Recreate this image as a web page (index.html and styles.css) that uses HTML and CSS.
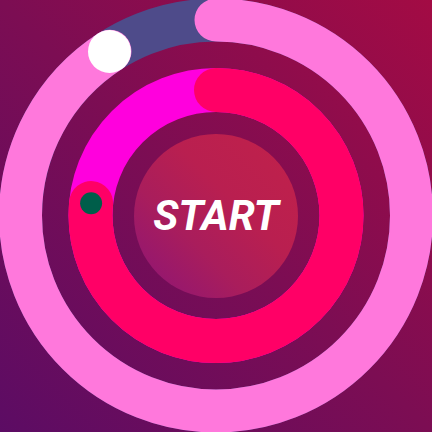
FILE: index.html
```html
<!DOCTYPE html>
<html lang="en">
<head>
<meta charset="utf-8">
<title>Start</title>
<link rel="stylesheet" href="styles.css">
</head>
<body>
<main class="stage">
  <svg class="rings" viewBox="0 0 432 432" width="432" height="432" aria-hidden="true">
    <g transform="rotate(-90 216 215.5)">
      <circle class="outer-track" cx="216" cy="215.5" r="195.5"/>
      <circle class="outer-progress" cx="216" cy="215.5" r="195.5" stroke-dasharray="1115.8 2000"/>
      <circle class="middle-track" cx="216" cy="215.5" r="125.5"/>
      <circle class="middle-progress" cx="216" cy="215.5" r="125.5" stroke-dasharray="603.6 2000"/>
    </g>
    <circle class="knob" cx="109.5" cy="51.5" r="21.5"/>
    <circle class="dot" cx="91.1" cy="203.2" r="11"/>
  </svg>
  <button class="start" type="button">START</button>
</main>
</body>
</html>
```
FILE: styles.css
```css
html, body {
  margin: 0;
  padding: 0;
}

body {
  width: 432px;
  height: 432px;
  overflow: hidden;
  font-family: Roboto, "Liberation Sans", sans-serif;
}

.stage {
  width: 432px;
  height: 432px;
  display: grid;
  background: linear-gradient(45deg, #5c0c64 0%, #7c0d53 50%, #a30b44 100%);
}

.stage > * {
  grid-area: 1 / 1;
}

.rings {
  display: block;
}

.rings circle {
  fill: none;
}

.outer-track {
  stroke: #4e4b8a;
  stroke-width: 43;
}

.outer-progress {
  stroke: #ff78dc;
  stroke-width: 43;
  stroke-linecap: round;
}

.middle-track {
  stroke: #ff00dd;
  stroke-width: 44;
}

.middle-progress {
  stroke: #ff0066;
  stroke-width: 44;
  stroke-linecap: round;
}

.rings .knob {
  fill: #ffffff;
}

.rings .dot {
  fill: #005e4a;
}

.start {
  place-self: center;
  width: 164px;
  height: 164px;
  margin: 0 0 1px 0;
  padding: 0;
  border: none;
  border-radius: 50%;
  background: linear-gradient(45deg, #8a1479 0%, #a91d5c 35%, #b91f50 60%, #c1214a 100%);
  color: #ffffff;
  font-family: Roboto, "Liberation Sans", sans-serif;
  font-size: 42px;
  font-weight: 700;
  font-style: italic;
  letter-spacing: 0;
  line-height: 1;
  cursor: pointer;
}
```
